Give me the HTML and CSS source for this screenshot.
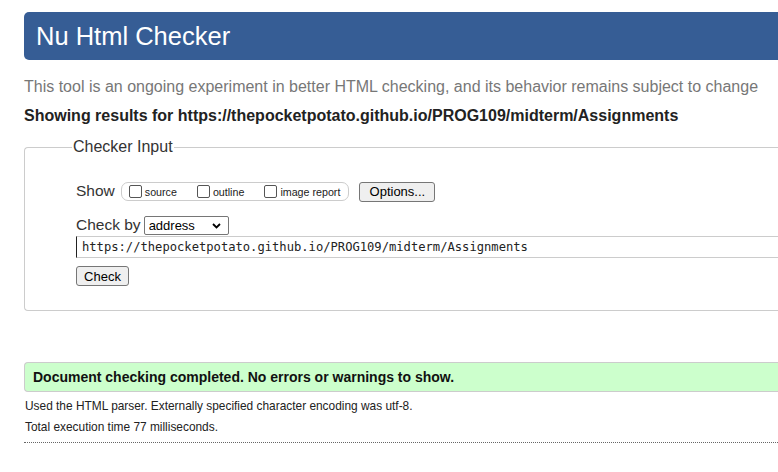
FILE: index.html
```html
<!DOCTYPE html>
<html lang="en">
<head>
<meta charset="utf-8">
<title>Showing results for https://thepocketpotato.github.io/PROG109/midterm/Assignments - Nu Html Checker</title>
<link rel="stylesheet" href="styles.css">
</head>
<body>
<div class="page">
  <h1 class="header">Nu Html Checker</h1>
  <p class="intro">This tool is an ongoing experiment in better HTML checking, and its behavior remains subject to change</p>
  <p class="results">Showing results for https://thepocketpotato.github.io/PROG109/midterm/Assignments</p>

  <form class="checker">
    <fieldset class="fs">
      <legend class="legend">Checker Input</legend>
      <div class="row row-show">
        <span class="label">Show</span>
        <span class="group">
          <label class="opt"><input type="checkbox" class="cb"><span>source</span></label>
          <label class="opt"><input type="checkbox" class="cb"><span>outline</span></label>
          <label class="opt"><input type="checkbox" class="cb"><span>image report</span></label>
        </span>
        <button type="button" class="btn btn-options">Options...</button>
      </div>
      <div class="row row-by">
        <span class="label">Check by</span>
        <span class="select-wrap">
          <select class="select"><option>address</option></select>
          <svg class="chev" width="9" height="6" viewBox="0 0 9 6"><polyline points="1,1 4.5,4.5 8,1" fill="none" stroke="#000" stroke-width="1.8"/></svg>
        </span>
      </div>
      <div class="row row-url">
        <input class="url" type="text" value="https://thepocketpotato.github.io/PROG109/midterm/Assignments">
      </div>
      <div class="row row-check">
        <button type="button" class="btn btn-check">Check</button>
      </div>
    </fieldset>
  </form>

  <p class="success">Document checking completed. No errors or warnings to show.</p>
  <p class="details">Used the HTML parser. Externally specified character encoding was utf-8.</p>
  <p class="details details-time">Total execution time 77 milliseconds.</p>
  <hr class="rule">
</div>
</body>
</html>
```

FILE: styles.css
```css
html, body {
  margin: 0;
  padding: 0;
  overflow: hidden;
  background: #fff;
}

body {
  font-family: "Liberation Sans", Arial, sans-serif;
  color: #222;
}

.page {
  width: 900px;
  padding: 12px 0 0 24px;
}

.header {
  margin: 0;
  height: 48px;
  line-height: 48px;
  padding-left: 12px;
  background: #365d95;
  color: #fff;
  font-size: 25.5px;
  font-weight: normal;
  border-radius: 5px 0 0 5px;
}

.intro {
  margin: 17px 0 0;
  font-size: 16px;
  line-height: 20px;
  color: #777;
}

.results {
  margin: 9px 0 0;
  font-size: 16px;
  line-height: 20px;
  font-weight: bold;
  color: #222;
}

.checker {
  margin: 11px 0 0;
}

.fs {
  margin: 0;
  border: 1px solid #ccc;
  border-right: none;
  border-radius: 4px 0 0 4px;
  padding: 0 0 24px 47px;
  min-width: 0;
}

.legend {
  padding: 0 1px;
  font-size: 16px;
  line-height: 20px;
  color: #333;
}

.row {
  display: flex;
  align-items: center;
  margin-left: 4px;
}

.label {
  font-size: 15.5px;
  line-height: 20px;
  color: #333;
}

.row-show {
  margin-top: 24px;
  height: 21px;
}

.row-show .label {
  margin-top: -2px;
}

.group {
  display: inline-flex;
  align-items: center;
  height: 17px;
  margin-left: 6px;
  padding: 0 8px 0 7px;
  border: 1px solid #ccc;
  border-radius: 7px;
}

.opt {
  display: inline-flex;
  align-items: center;
  font-size: 10.7px;
  color: #222;
  margin-right: 20px;
}

.opt:last-child {
  margin-right: 0;
}

.cb {
  appearance: none;
  -webkit-appearance: none;
  width: 13px;
  height: 13px;
  margin: 0 3px 0 0;
  border: 1px solid #555;
  border-radius: 2px;
  background: #fff;
}

.btn {
  font-family: "Liberation Sans", Arial, sans-serif;
  font-size: 13px;
  height: 20px;
  padding: 0;
  color: #000;
  background: #efefef;
  border: 1px solid #767676;
  border-radius: 3px;
}

.btn-options {
  width: 76px;
  margin-left: 10px;
}

.row-by {
  margin-top: 12px;
  height: 21px;
}

.select-wrap {
  position: relative;
  display: inline-block;
  margin-left: 3px;
  margin-top: 1px;
}

.select {
  appearance: none;
  -webkit-appearance: none;
  display: block;
  width: 85px;
  height: 19px;
  margin: 0;
  padding: 0 0 0 4px;
  font-family: "Liberation Sans", Arial, sans-serif;
  font-size: 13px;
  color: #000;
  background: #fff;
  border: 1px solid #767676;
  border-radius: 2px;
}

.chev {
  position: absolute;
  left: 68px;
  top: 7px;
  pointer-events: none;
}

.row-url {
  margin-top: 1px;
}

.url {
  display: block;
  width: 100%;
  height: 22px;
  margin: 0;
  padding: 0 0 0 5px;
  box-sizing: border-box;
  font-family: "DejaVu Sans Mono", "Liberation Mono", monospace;
  font-size: 12.15px;
  color: #222;
  border: 1px solid #ccc;
  border-left: 1px solid #222;
  border-right: none;
  border-radius: 0;
  outline: none;
  background: #fff;
}

.row-check {
  margin-top: 8px;
}

.btn-check {
  width: 53px;
}

.success {
  margin: 51px 0 0;
  height: 28px;
  line-height: 28px;
  padding-left: 8px;
  font-size: 14px;
  font-weight: bold;
  color: #111;
  background: #ccffcc;
  border: 1px solid #ccc;
  border-right: none;
  border-radius: 4px 0 0 4px;
}

.details {
  margin: 7px 0 0 1px;
  font-size: 11.9px;
  line-height: 15px;
  color: #222;
}

.details-time {
  margin-top: 6px;
}

.rule {
  margin: 7px 0 0;
  height: 0;
  border: none;
  border-top: 1px dotted #666;
}
```
